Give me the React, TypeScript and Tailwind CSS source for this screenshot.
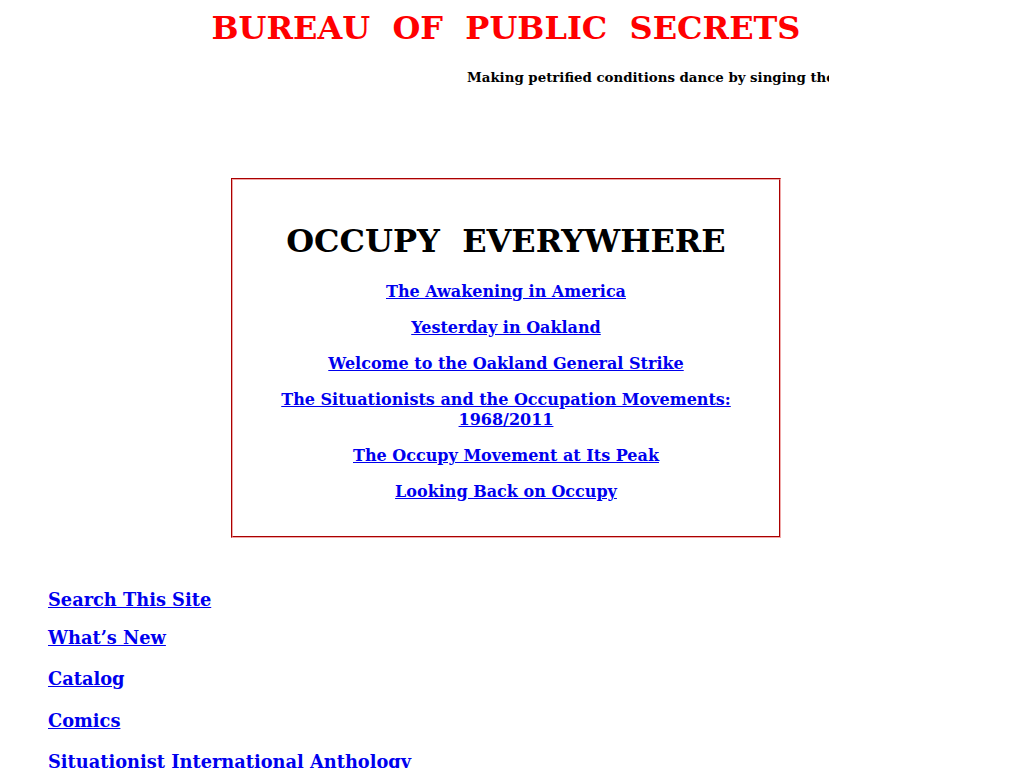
export default function App() {
  const links = [
    ["The Awakening in America"],
    ["Yesterday in Oakland"],
    ["Welcome to the Oakland General Strike"],
    ["The Situationists and the Occupation Movements:", "1968/2011"],
    ["The Occupy Movement at Its Peak"],
    ["Looking Back on Occupy "],
  ];
  const side = [
    ["Search This Site", "mt-0"],
    ["What\u2019s New", "mt-[17px]"],
    ["Catalog", "mt-[20px]"],
    ["Comics", "mt-[21px]"],
    ["Situationist International Anthology", "mt-[20px]"],
  ];
  return (
    <div className="min-h-screen bg-white font-['DejaVu_Serif',serif] font-bold overflow-hidden">
      <div className="w-[1012px] pt-[10px] text-center text-[32px] leading-[37px] text-[#ff0000] whitespace-pre">
        {"BUREAU  OF  PUBLIC  SECRETS"}
      </div>
      <div className="mt-[22px] ml-[183px] w-[646px] overflow-hidden whitespace-nowrap text-[13.33px] leading-[16px] text-black">
        <span className="pl-[284px]">Making petrified conditions dance by singing them their own tune</span>
      </div>
      <div className="mt-[93px] ml-[231px] w-[550px] h-[360px] border border-t-[#aa0000] border-l-[#aa0000] border-r-[#f0a8a8] border-b-[#f0a8a8]">
        <div className="h-full border border-t-[#f0a8a8] border-l-[#f0a8a8] border-r-[#aa0000] border-b-[#aa0000] px-[43px] text-center">
          <div className="mt-[43px] text-[32px] leading-[37px] text-black whitespace-pre">{"OCCUPY  EVERYWHERE"}</div>
          <div className="mt-[22px] flex flex-col gap-[16px] text-[16px] leading-[20px]">
            {links.map((l, i) => (
              <a key={i} href="#" className="text-[#0000ee] underline whitespace-pre-line">
                {l.map((t, j) => (
                  <span key={j} className="block">{t}</span>
                ))}
              </a>
            ))}
          </div>
        </div>
      </div>
      <div className="mt-[51px] ml-[48px] flex flex-col items-start text-[17.8px] leading-[21px]">
        {side.map(([t, m], i) => (
          <a key={i} href="#" className={`text-[#0000ee] underline ${m}`}>{t}</a>
        ))}
      </div>
    </div>
  );
}
